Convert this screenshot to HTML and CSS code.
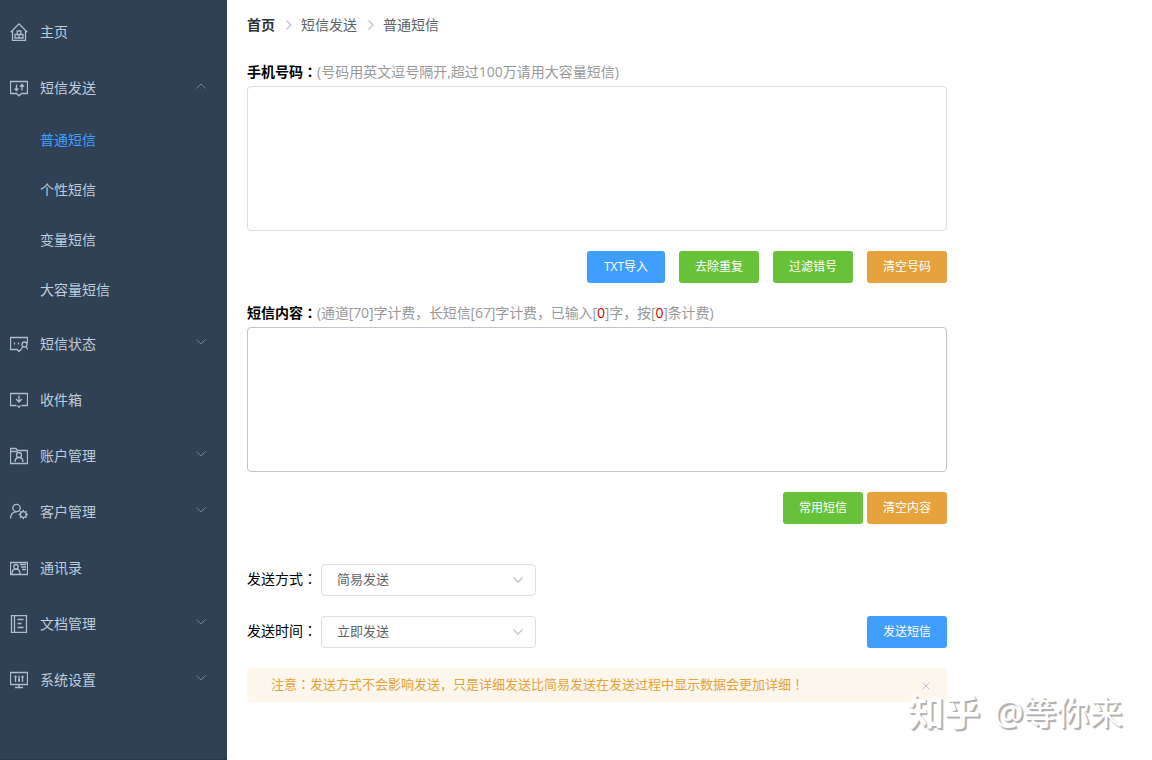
FILE: index.html
```html
<!DOCTYPE html>
<html lang="zh-CN">
<head>
    <meta charset="UTF-8">
    <title>普通短信</title>
    <link rel="stylesheet" href="styles.css">
</head>
<body>
    <div class="sidebar">
        <div class="menu-item">
            <svg class="icon" viewBox="0 0 18 18"><path d="M.7 9.300 9 .9l8.300 8.400M2.500 8v9.300h13V8M7.200 8h3.600v3.500H7.200zM5 11.500h4V15H5zM9 11.500h4V15H9z"/></svg>
            <span>主页</span>
        </div>
        <div class="menu-item">
            <svg class="icon" viewBox="0 0 18 18"><path d="M.5 2.500h17v12h-6L9 16.800l-2.500-2.300h-6zM6.500 5.500v6M4.500 9.500l2 2 2-2M12 11.500v-6M10 7.500l2-2 2 2"/></svg>
            <span>短信发送</span>
            <svg class="arrow up" viewBox="0 0 10 6"><path d="M.5.5 5 5 9.500.5"/></svg>
        </div>
        <div class="submenu">
            <div class="submenu-item active">普通短信</div>
            <div class="submenu-item">个性短信</div>
            <div class="submenu-item">变量短信</div>
            <div class="submenu-item">大容量短信</div>
        </div>
        <div class="menu-item">
            <svg class="icon" viewBox="0 0 18 18"><path d="M11 14.500 9 16.500l-2-2H.5v-12h17V8M4.500 7.500v2M8.500 7.500v2M11 14.500l2-3M16 11.500l1.700 3"/><circle cx="14.500" cy="9.500" r="2.500"/></svg>
            <span>短信状态</span>
            <svg class="arrow" viewBox="0 0 10 6"><path d="M.5.5 5 5 9.500.5"/></svg>
        </div>
        <div class="menu-item">
            <svg class="icon" viewBox="0 0 18 18"><path d="M6.500 14.500h-6v-12h17v12h-6M9 4.500v6.500M6 8l3 3 3-3M7.500 14.500 9 16.300l1.500-1.800"/></svg>
            <span>收件箱</span>
        </div>
        <div class="menu-item">
            <svg class="icon" viewBox="0 0 18 18"><path d="M.5 16.500v-15H6l1.500 2h10v13zM.5 4.500h7M5 15c0-3 1.500-4.500 4-4.500s4 1.500 4 4.500"/><circle cx="9" cy="8" r="2.500"/></svg>
            <span>账户管理</span>
            <svg class="arrow" viewBox="0 0 10 6"><path d="M.5.5 5 5 9.500.5"/></svg>
        </div>
        <div class="menu-item">
            <svg class="icon" viewBox="0 0 18 18"><circle cx="6.500" cy="5" r="3.700"/><path d="M.6 15.500C.6 11 3 8.800 6.500 8.800M13.300 6.800v2M13.300 14.200v2M8.600 11.500h2M16 11.500h2M10 8.200l1.400 1.400M15.200 13.400l1.400 1.400M16.600 8.200l-1.400 1.400M11.400 13.400 10 14.800"/><circle cx="13.300" cy="11.500" r="2.900"/></svg>
            <span>客户管理</span>
            <svg class="arrow" viewBox="0 0 10 6"><path d="M.5.5 5 5 9.500.5"/></svg>
        </div>
        <div class="menu-item">
            <svg class="icon" viewBox="0 0 18 18"><path d="M.5 3.500h17v12H.5zM2 15c0-3 1-5 4-5s4 2 4 5M10 5.500h6M11 8h5M12 10.500h4"/><circle cx="6" cy="7.700" r="2.200"/></svg>
            <span>通讯录</span>
        </div>
        <div class="menu-item">
            <svg class="icon" viewBox="0 0 18 18"><path d="M1.500.5h15v17h-15zM4.500.5v17M7.500 4.500h6M7.500 8.500h4M7.500 12.500h6"/></svg>
            <span>文档管理</span>
            <svg class="arrow" viewBox="0 0 10 6"><path d="M.5.5 5 5 9.500.5"/></svg>
        </div>
        <div class="menu-item">
            <svg class="icon" viewBox="0 0 18 18"><path d="M.5 1.500h17v12H.5zM9 13.500v3M5 16.500h8M5.500 4.500V11M9 4.500V11M12.500 4.500V11"/><path d="M4.500 6h2M8 9h2M11.500 6h2" stroke-width="2"/></svg>
            <span>系统设置</span>
            <svg class="arrow" viewBox="0 0 10 6"><path d="M.5.5 5 5 9.500.5"/></svg>
        </div>
    </div>

    <div class="main">
        <div class="breadcrumb">
            <b>首页</b>
            <svg class="sep" viewBox="0 0 6 10"><path d="M.5.5 5 5 .5 9.500"/></svg>
            <span>短信发送</span>
            <svg class="sep" viewBox="0 0 6 10"><path d="M.5.5 5 5 .5 9.500"/></svg>
            <span>普通短信</span>
        </div>

        <div class="label"><b>手机号码<i lang="zh-TW">：</i></b>(号码用英文逗号隔开,超过100万请用大容量短信)</div>
        <textarea class="textarea"></textarea>
        <div class="buttons">
            <button class="btn primary">TXT导入</button>
            <button class="btn success">去除重复</button>
            <button class="btn success">过滤错号</button>
            <button class="btn warning">清空号码</button>
        </div>

        <div class="label"><b>短信内容<i lang="zh-TW">：</i></b><span class="count">(通道[70]字计费，长短信[67]字计费，已输入[<em>0</em>]字，按[<em>0</em>]条计费)</span></div>
        <textarea class="textarea hover"></textarea>
        <div class="buttons tight">
            <button class="btn success">常用短信</button>
            <button class="btn warning">清空内容</button>
        </div>

        <div class="row">
            <span class="row-label">发送方式<i lang="zh-TW">：</i></span>
            <div class="select">简易发送<svg class="arrow" viewBox="0 0 10 6"><path d="M.5.5 5 5 9.500.5"/></svg></div>
        </div>
        <div class="row">
            <span class="row-label">发送时间<i lang="zh-TW">：</i></span>
            <div class="select">立即发送<svg class="arrow" viewBox="0 0 10 6"><path d="M.5.5 5 5 9.500.5"/></svg></div>
            <button class="btn primary send">发送短信</button>
        </div>

        <div class="alert">
            <span>注意<i lang="zh-TW">：</i>发送方式不会影响发送，只是详细发送比简易发送在发送过程中显示数据会更加详细<i lang="zh-TW">！</i></span>
            <svg class="close" viewBox="0 0 8 8"><path d="m.5.5 7 7M7.500.5l-7 7"/></svg>
        </div>
    </div>

    <div class="watermark"><b>知乎</b><span>@等你来</span></div>
</body>
</html>
```
FILE: styles.css
```css
* {
    box-sizing: border-box;
}
body {
    margin: 0;
    display: flex;
    height: 760px;
    overflow: hidden;
    background: #fff;
    color: #000;
    font-family: "Open Sans", "Noto Sans CJK SC", sans-serif;
    font-size: 14px;
}
i {
    font-style: normal;
    font-family: "Noto Sans CJK TC", sans-serif;
}
svg {
    fill: none;
    stroke: currentColor;
    flex-shrink: 0;
}

/* 左侧菜单 */
.sidebar {
    width: 227px;
    height: 760px;
    padding-top: 4px;
    background: #304156;
    border-bottom: 1px solid #2a3648;
    color: #bfcbd9;
}
.menu-item {
    display: flex;
    align-items: center;
    height: 56px;
    padding: 0 21px 0 10px;
}
.menu-item span {
    margin-top: -2px;
}
.icon {
    width: 18px;
    height: 18px;
    margin-right: 12px;
    stroke-width: 1.3;
    color: #aebccb;
}
.arrow {
    width: 10px;
    height: 6px;
    margin-left: auto;
    color: #75808e;
}
.menu-item .arrow {
    margin-top: -4px;
}
.arrow.up {
    transform: rotate(180deg);
}
.submenu-item {
    height: 50px;
    padding-left: 40px;
    line-height: 48px;
}
.submenu-item.active {
    color: #409eff;
}

/* 右侧内容 */
.main {
    width: 700px;
    margin-left: 20px;
}
.breadcrumb {
    display: flex;
    align-items: center;
    height: 48px;
    color: #606266;
}
.breadcrumb b {
    color: #303133;
}
.sep {
    width: 6px;
    height: 10px;
    margin: 2px 9px 0 11px;
    stroke-width: 1.3;
    color: #c0c4cc;
}
.label {
    height: 25px;
    line-height: 20px;
    color: #999;
}
.label b {
    color: #000;
}
.label em {
    font-style: normal;
    color: #d00000;
}
.count {
    letter-spacing: -0.12px;
}
.breadcrumb + .label {
    margin-top: 13px;
}
.textarea {
    display: block;
    width: 700px;
    height: 145px;
    border: 1px solid #dcdfe6;
    border-radius: 4px;
    resize: none;
}
.textarea.hover {
    border-color: #c0c4cc;
}
.buttons {
    display: flex;
    justify-content: flex-end;
    gap: 14px;
    margin: 20px 0 19px;
}
.buttons.tight {
    gap: 4px;
    margin-bottom: 40px;
}
.btn {
    width: 80px;
    height: 32px;
    padding: 0;
    border: none;
    border-radius: 3px;
    color: #fff;
    font-family: inherit;
    font-size: 12px;
    line-height: 32px;
}
.primary {
    background: #409eff;
}
.success {
    background: #67c23a;
}
.warning {
    background: #e6a23c;
}
.buttons .primary {
    width: 78px;
}
.row {
    display: flex;
    align-items: center;
    height: 32px;
    margin-bottom: 20px;
}
.row-label {
    width: 74px;
    line-height: 30px;
    margin-top: -4px;
}
.select {
    display: flex;
    align-items: center;
    width: 215px;
    height: 32px;
    padding: 0 12px 3px 15px;
    border: 1px solid #dcdfe6;
    border-radius: 4px;
    color: #606266;
    font-size: 13px;
}
.select .arrow {
    margin-top: 3px;
    stroke-width: 1.3;
    color: #c0c4cc;
}
.send {
    margin-left: auto;
}
.alert {
    display: flex;
    align-items: center;
    justify-content: space-between;
    height: 34px;
    padding: 0 17px 0 24px;
    border-radius: 4px;
    background: #fdf6ec;
    color: #e6a23c;
    font-size: 13px;
    line-height: 32px;
}
.alert span {
    margin-top: -2px;
}
.close {
    width: 8px;
    height: 8px;
    margin-top: 1px;
    color: #c0c4cc;
}

/* 水印 */
.watermark {
    position: absolute;
    left: 908px;
    top: 688px;
    display: flex;
    gap: 14px;
    color: #fff;
    font-size: 33px;
    line-height: 50px;
    white-space: nowrap;
    text-shadow: 1px 1px 0 #b5b5b5, 2px 2px 1px #aaa;
}
.watermark b {
    font-size: 36px;
}
```
